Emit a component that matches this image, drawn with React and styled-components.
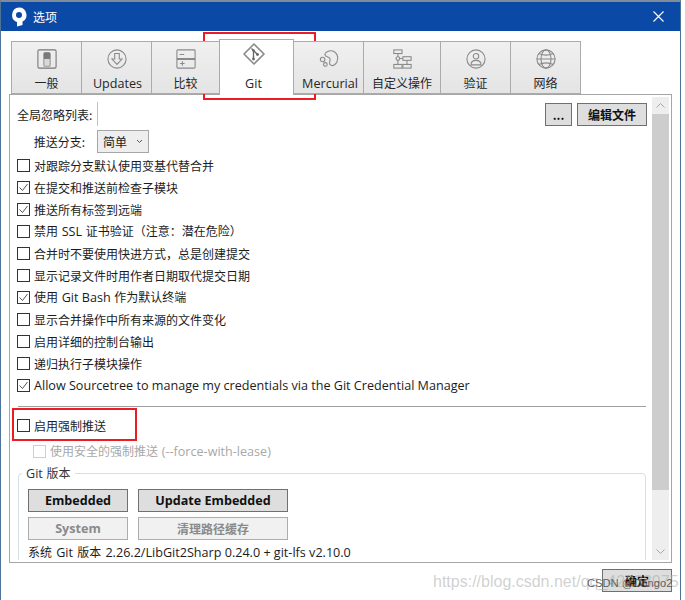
import React from "react";
import styled, { createGlobalStyle } from "styled-components";

const Global = createGlobalStyle`
  html, body { margin: 0; padding: 0; background: #fff; }
  body { width: 685px; height: 600px; overflow: hidden; font-family: "Noto Sans CJK SC", "Open Sans", sans-serif; font-size: 12px; color: #1c1c1c; }
`;

const Page = styled.div`
  position: relative;
  width: 685px;
  height: 600px;
  overflow: hidden;
  background: #fff;
`;
const Win = styled.div`
  width: 681px;
  height: 600px;
  box-sizing: border-box;
  border-left: 1px solid #4d7399;
  border-right: 1px solid #4d7399;
  border-top: 2px solid #7f8b99;
  background: #fff;
  display: flex;
  flex-direction: column;
`;
const TitleBar = styled.div`
  height: 29px;
  flex: none;
  background: #0a49a6;
  display: flex;
  align-items: center;
  padding: 0 15px 0 10px;
  gap: 6px;
  color: #fff;
  font-size: 12px;
`;
const TitleText = styled.span`flex: 1;`;
const Tabs = styled.div`
  display: flex;
  align-items: flex-end;
  height: 63px;
  flex: none;
  padding-left: 10px;
  position: relative;
  z-index: 1;
`;
const Tab = styled.div`
  box-sizing: border-box;
  width: ${p => p.$w}px;
  height: ${p => (p.$active ? 56 : 53)}px;
  margin-bottom: ${p => (p.$active ? -1 : 0)}px;
  border: 1px solid #ababab;
  border-bottom: ${p => (p.$active ? "none" : "1px solid #ababab")};
  margin-left: ${p => (p.$first ? 0 : -1)}px;
  background: ${p => (p.$active ? "#fff" : "linear-gradient(#f0f0f0, #e4e4e4)")};
  display: flex;
  flex-direction: column;
  align-items: center;
  padding-top: ${p => (p.$active ? 3 : 7)}px;
  padding-right: ${p => (p.$active ? 6 : 0)}px;
  color: #262626;
  font-size: 12px;
`;
const TabIcon = styled.svg`
  width: ${p => (p.$active ? 22 : 20)}px;
  height: ${p => (p.$active ? 22 : 20)}px;
  flex: none;
  fill: none;
  stroke: #8a8a8a;
  stroke-width: 1.2;
`;
const TabLabel = styled.span`
  margin-top: ${p => (p.$active ? 9 : 5)}px;
  margin-left: ${p => p.$nudge || 0}px;
  line-height: 18px;
  white-space: nowrap;
`;
const Latin = styled.span`
  font-family: "Open Sans", sans-serif;
  font-size: 12.6px;
  word-spacing: 0;
`;
const Panel = styled.div`
  margin-left: 8px;
  width: 663px;
  height: 469px;
  flex: none;
  box-sizing: border-box;
  border: 1px solid #a6a6a6;
  display: flex;
  padding: 2px 2px 2px 0;
`;
const Scroller = styled.div`
  flex: 1;
  min-width: 0;
  overflow: hidden;
  padding: 5px 6px 0 7px;
`;
const TopRow = styled.div`
  display: flex;
  align-items: center;
  height: 24px;
  margin-right: -1px;
`;
const FieldLabel = styled.span`
  width: ${p => p.$w}px;
  white-space: nowrap;
  flex: none;
  text-align: right;
`;
const IgnoreInput = styled.div`
  flex: 1;
  align-self: stretch;
  margin: 0 8px 0 5px;
  border-left: 1px solid #a9c4e4;
`;
const Btn = styled.div`
  box-sizing: border-box;
  height: 23px;
  width: ${p => p.$w}px;
  flex: none;
  display: flex;
  align-items: center;
  justify-content: center;
  border: 1px solid ${p => (p.$off ? "#adadad" : "#707070")};
  background: ${p => (p.$off ? "#f1f1f1" : "#dedede")};
  color: ${p => (p.$off ? "#8a8a8a" : "#111")};
  font-weight: 700;
  font-size: 12px;
  margin-left: ${p => p.$ml || 0}px;
`;
const BranchRow = styled.div`
  display: flex;
  align-items: center;
  height: 23px;
  margin: 4px 0 1px;
  gap: 12px;
`;
const Select = styled.div`
  box-sizing: border-box;
  width: 52px;
  height: 23px;
  border: 1px solid #a6a6a6;
  background: #eee;
  display: flex;
  align-items: center;
  padding-left: 5px;
  gap: 9px;
`;
const Checks = styled.div`
  display: flex;
  flex-direction: column;
`;
const Row = styled.div`
  display: flex;
  align-items: center;
  height: 22px;
  gap: 4px;
  white-space: nowrap;
  word-spacing: 1px;
  padding-left: ${p => p.$indent || 0}px;
  margin-top: ${p => p.$top || 0}px;
  color: ${p => (p.$off ? "#a8a8a8" : "inherit")};
`;
const Box = styled.div`
  box-sizing: border-box;
  width: 13px;
  height: 13px;
  flex: none;
  border: 1px solid ${p => (p.$off ? "#cfcfcf" : "#333")};
  background: #fff;
  display: flex;
`;
const Rule = styled.div`
  height: 1px;
  background: #a0a0a0;
  margin: 10px 0 7px 1px;
`;
const Group = styled.fieldset`
  margin: 4px 0 0 1px;
  padding: 8px 0 0 9px;
  height: 120px;
  border: 1px solid #d5dfe6;
  border-radius: 4px;
  box-sizing: border-box;
`;
const Legend = styled.legend`
  padding: 0 4px;
  margin-left: -6px;
  line-height: 14px;
  color: #333;
  word-spacing: 1px;
`;
const BtnRow = styled.div`
  display: flex;
  margin-bottom: 5px;
`;
const VersionLine = styled.div`
  line-height: 14px;
  margin-top: 3px;
  white-space: nowrap;
  word-spacing: 1.5px;
`;
const ScrollBar = styled.div`
  width: 17px;
  flex: none;
  background: #eee;
  display: flex;
  flex-direction: column;
  align-items: center;
`;
const Arrow = styled.svg`
  width: 17px;
  height: 17px;
  flex: none;
  fill: none;
  stroke: #a6a6a6;
  stroke-width: 1;
`;
const Thumb = styled.div`
  width: 17px;
  height: 376px;
  flex: none;
  background: #cdcdcd;
`;
const Spacer = styled.div`flex: 1;`;
const Footer = styled.div`
  display: flex;
  justify-content: flex-end;
  padding: 6px 8px 0 0;
`;
const RedBox = styled.div`
  position: absolute;
  left: ${p => p.$x}px;
  top: ${p => p.$y}px;
  width: ${p => p.$w}px;
  height: ${p => p.$h}px;
  box-sizing: border-box;
  border: 2px solid #ed1c24;
  pointer-events: none;
`;
const Mark = styled.div`
  position: absolute;
  white-space: nowrap;
  font-family: "Liberation Sans", sans-serif;
  left: ${p => p.$x}px;
  top: ${p => p.$y}px;
  font-size: ${p => p.$s}px;
  color: ${p => p.$c};
  pointer-events: none;
`;

const Check = () => (
  <svg width="11" height="11" viewBox="0 0 11 11" fill="none" stroke="#555" strokeWidth="1">
    <path d="M1.500 5.500 L4.500 8.500 L9.500 2" />
  </svg>
);

const CheckRow = ({ on, off, indent, top, children }) => (
  <Row $off={off} $indent={indent} $top={top}>
    <Box $off={off}>{on && <Check />}</Box>
    <span>{children}</span>
  </Row>
);

const TABS = [
  { w: 71, label: "一般", icon: <><rect x="1" y="1" width="20" height="20" rx="1.500" stroke="#777" /><rect x="7.500" y="4" width="7" height="15" rx="1.500" fill="#d8d8d8" stroke="#999" /><rect x="7.500" y="4" width="7" height="7" rx="1" fill="#7a7a7a" stroke="none" /></> },
  { w: 71, label: <Latin>Updates</Latin>, nudge: 2, icon: <><circle cx="11" cy="11" r="10" /><path d="M8.500 5 h5 v6 h3 L11 17 L5.500 11 h3 Z" /></> },
  { w: 69, label: "比较", icon: <><rect x="1" y="1" width="20" height="20" rx="1" /><path d="M1 10.500 H21 M1 11.500 H21 M4 6 H9 M4.500 16 H9.500 M7 13.500 V18.500" /></> },
  { w: 75, label: <Latin>Git</Latin>, active: true, icon: <><path d="M11 1 L21 11 L11 21 L1 11 Z" strokeWidth="1.600" strokeLinejoin="round" /><path d="M8.500 5.500 L14.500 11.500 M10.500 7.500 V16" stroke="#666" strokeWidth="1.300" /><circle cx="10.500" cy="16" r="1.400" fill="#666" stroke="none" /><circle cx="14.500" cy="11.500" r="1.400" fill="#666" stroke="none" /><circle cx="10.500" cy="7.500" r="1.300" fill="#666" stroke="none" /></> },
  { w: 71, label: <Latin>Mercurial</Latin>, nudge: 3, icon: <><path d="M9 3 C15 0 21 4 20.500 11 C20 17 15 20 12 17 C10.500 15 13 13 12 10.500 C11 8 6.500 9 6.500 6 C6.500 5 7.500 3.800 9 3 Z" /><circle cx="4" cy="11.500" r="2.500" /><circle cx="7" cy="17" r="2" /></> },
  { w: 78, label: "自定义操作", icon: <><rect x="2" y="1" width="9" height="4" /><rect x="2" y="17" width="9" height="4" /><rect x="12" y="8.500" width="9" height="4" /><rect x="12" y="17" width="9" height="4" /><circle cx="6.500" cy="10.500" r="2" /><path d="M6.500 5 V8.500 M6.500 12.500 V17 M8.500 10.500 H12 M16.500 12.500 V17" /></> },
  { w: 71, label: "验证", icon: <><circle cx="11" cy="11" r="10" /><circle cx="11" cy="8" r="3" /><path d="M5.500 17.500 C5.500 13.500 8 12.500 11 12.500 C14 12.500 16.500 13.500 16.500 17.500 Z" /></> },
  { w: 71, label: "网络", icon: <><circle cx="11" cy="11" r="10" /><ellipse cx="11" cy="11" rx="5.500" ry="10" /><path d="M3 5 Q11 8.500 19 5 M3 17 Q11 13.500 19 17 M1 11 H21" /></> },
];

const ITEMS = [
  [false, "对跟踪分支默认使用变基代替合并"],
  [true, "在提交和推送前检查子模块"],
  [true, "推送所有标签到远端"],
  [false, <>禁用 <Latin>SSL</Latin> 证书验证（注意：潜在危险）</>],
  [false, "合并时不要使用快进方式，总是创建提交"],
  [false, "显示记录文件时用作者日期取代提交日期"],
  [true, <>使用 <Latin>Git Bash</Latin> 作为默认终端</>],
  [false, "显示合并操作中所有来源的文件变化"],
  [false, "启用详细的控制台输出"],
  [false, "递归执行子模块操作"],
  [true, <Latin>Allow Sourcetree to manage my credentials via the Git Credential Manager</Latin>],
];

export default function App() {
  return (
    <Page>
      <Global />
      <Win>
        <TitleBar>
          <svg width="16" height="20" viewBox="0 0 16 20">
            <path fillRule="evenodd" fill="#fff" d="M8 0.500 A7.500 7.500 0 0 1 11.500 14.600 V18 L6 19.500 V15 A7.500 7.500 0 0 1 8 0.500 Z M8 5 A3 3 0 1 0 8 11 A3 3 0 1 0 8 5 Z" />
          </svg>
          <TitleText>选项</TitleText>
          <svg width="13" height="13" viewBox="0 0 13 13" stroke="#fff" strokeWidth="1.100">
            <path d="M1.500 1.500 L11.500 11.500 M11.500 1.500 L1.500 11.500" />
          </svg>
        </TitleBar>
        <Tabs>
          {TABS.map((t, i) => (
            <Tab key={i} $w={t.w} $active={t.active} $first={i === 0}>
              <TabIcon $active={t.active} viewBox="0 0 22 22">{t.icon}</TabIcon>
              <TabLabel $active={t.active} $nudge={t.nudge}>{t.label}</TabLabel>
            </Tab>
          ))}
        </Tabs>
        <Panel>
          <Scroller>
            <TopRow>
              <FieldLabel $w={75}>全局忽略列表:</FieldLabel>
              <IgnoreInput />
              <Btn $w={27}>...</Btn>
              <Btn $w={70} $ml={5}>编辑文件</Btn>
            </TopRow>
            <BranchRow>
              <FieldLabel $w={68}>推送分支:</FieldLabel>
              <Select>
                简单
                <svg width="7" height="5" viewBox="0 0 7 5" fill="none" stroke="#555"><path d="M1 1 L3.500 3.500 L6 1" /></svg>
              </Select>
            </BranchRow>
            <Checks>
              {ITEMS.map(([on, label], i) => (
                <CheckRow key={i} on={on}>{label}</CheckRow>
              ))}
            </Checks>
            <Rule />
            <CheckRow>启用强制推送</CheckRow>
            <CheckRow off indent={16} top={4}>使用安全的强制推送 <Latin>(--force-with-lease)</Latin></CheckRow>
            <Group>
              <Legend><Latin>Git</Latin> 版本</Legend>
              <BtnRow>
                <Btn $w={100}><Latin>Embedded</Latin></Btn>
                <Btn $w={150} $ml={10}><Latin>Update Embedded</Latin></Btn>
              </BtnRow>
              <BtnRow>
                <Btn $w={100} $off><Latin>System</Latin></Btn>
                <Btn $w={150} $ml={10} $off>清理路径缓存</Btn>
              </BtnRow>
              <VersionLine>系统 <Latin>Git</Latin> 版本 <Latin>2.26.2/LibGit2Sharp 0.24.0 + git-lfs v2.10.0</Latin></VersionLine>
            </Group>
          </Scroller>
          <ScrollBar>
            <Arrow viewBox="0 0 17 17"><path d="M4.500 10.500 L8.500 6.500 L12.500 10.500" /></Arrow>
            <Thumb />
            <Spacer />
            <Arrow viewBox="0 0 17 17"><path d="M4.500 6.500 L8.500 10.500 L12.500 6.500" /></Arrow>
          </ScrollBar>
        </Panel>
        <Footer>
          <Btn $w={70}>确定</Btn>
        </Footer>
      </Win>
      <RedBox $x={203} $y={32} $w={113} $h={68} />
      <RedBox $x={12} $y={408} $w={125} $h={33} />
      <Mark $x={433} $y={573} $s={16} $c="rgba(170,170,170,0.55)">https://blog.csdn.net/qq_42238975</Mark>
      <Mark $x={587} $y={577} $s={11.200} $c="rgba(70,70,70,0.85)">CSDN @Dongo2</Mark>
    </Page>
  );
}
